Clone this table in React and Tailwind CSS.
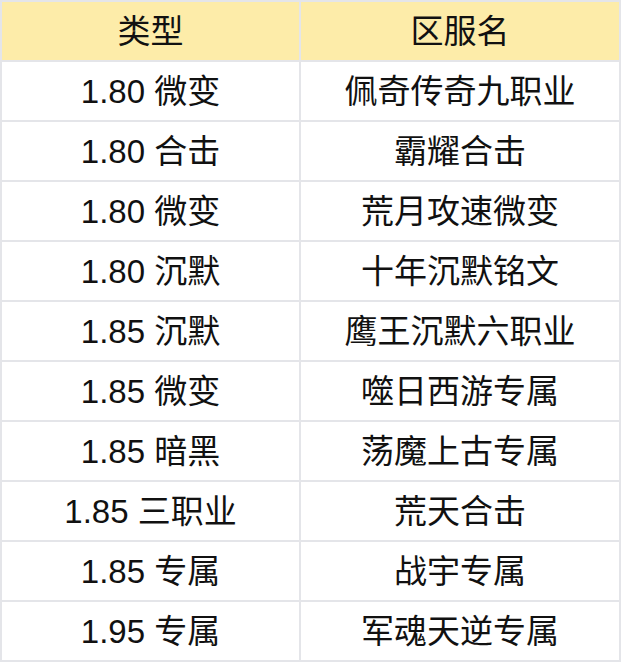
const ROWS = [
  ["1.80 微变", "佩奇传奇九职业"],
  ["1.80 合击", "霸耀合击"],
  ["1.80 微变", "荒月攻速微变"],
  ["1.80 沉默", "十年沉默铭文"],
  ["1.85 沉默", "鹰王沉默六职业"],
  ["1.85 微变", "噬日西游专属"],
  ["1.85 暗黑", "荡魔上古专属"],
  ["1.85 三职业", "荒天合击"],
  ["1.85 专属", "战宇专属"],
  ["1.95 专属", "军魂天逆专属"],
];

export default function App() {
  return (
    <div className="w-[623px] h-[663px] bg-white">
      <div
        className="w-[621px] grid grid-cols-[297px_318px] gap-[2px] p-[2px] bg-[#e4e5e9] text-[33px] text-[#111111] leading-none"
        style={{ fontFamily: '"Liberation Sans", "Noto Sans CJK SC", sans-serif' }}
      >
        <div className="h-[58px] flex items-center justify-center bg-[#fdeca9]">类型</div>
        <div className="h-[58px] flex items-center justify-center bg-[#fdeca9]">区服名</div>
        {ROWS.map(([type, name], i) => (
          <>
            <div key={`t${i}`} className="h-[58px] flex items-center justify-center bg-white">
              {type}
            </div>
            <div key={`n${i}`} className="h-[58px] flex items-center justify-center bg-white">
              {name}
            </div>
          </>
        ))}
      </div>
    </div>
  );
}
